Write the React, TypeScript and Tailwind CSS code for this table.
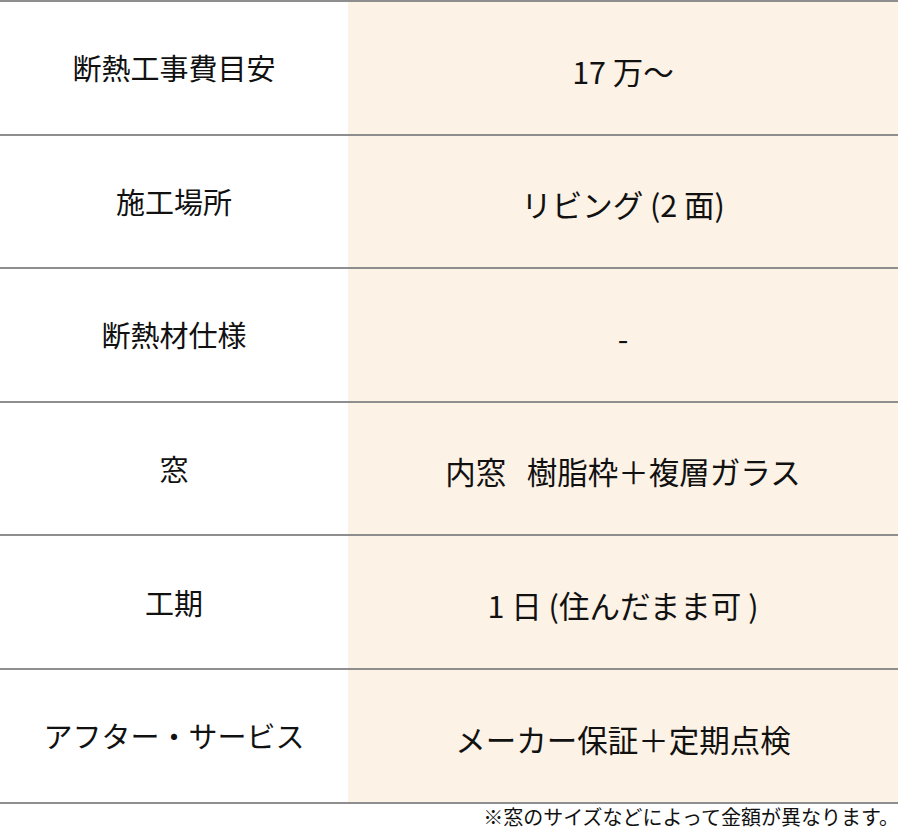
const ROWS: [string, string][] = [
  ["断熱工事費目安", "17 万～"],
  ["施工場所", "リビング (2 面)"],
  ["断熱材仕様", "-"],
  ["窓", "内窓   樹脂枠＋複層ガラス"],
  ["工期", "1 日 (住んだまま可 )"],
  ["アフター・サービス", "メーカー保証＋定期点検"],
];

export default function App() {
  return (
    <div
      className="w-[899px] h-[836px] bg-white text-[#111] overflow-hidden"
      style={{ fontFamily: '"Noto Sans CJK JP", "Noto Sans", sans-serif' }}
    >
      <div className="w-[898px] border-t-2 border-[#8e8e8e]">
        {ROWS.map(([label, value], i) => (
          <div
            key={i}
            className="grid grid-cols-[348px_1fr] h-[133.6px] border-b-2 border-[#8e8e8e]"
          >
            <div className="flex items-center justify-center text-[29px] leading-none">
              {label}
            </div>
            <div className="flex items-center justify-center whitespace-pre bg-[#fdf2e6] text-[30.5px] leading-none pt-[6px]">
              {value}
            </div>
          </div>
        ))}
      </div>
      <div className="w-[899px] text-right text-[20px] leading-none pt-[3px]">
        ※窓のサイズなどによって金額が異なります。
      </div>
    </div>
  );
}
